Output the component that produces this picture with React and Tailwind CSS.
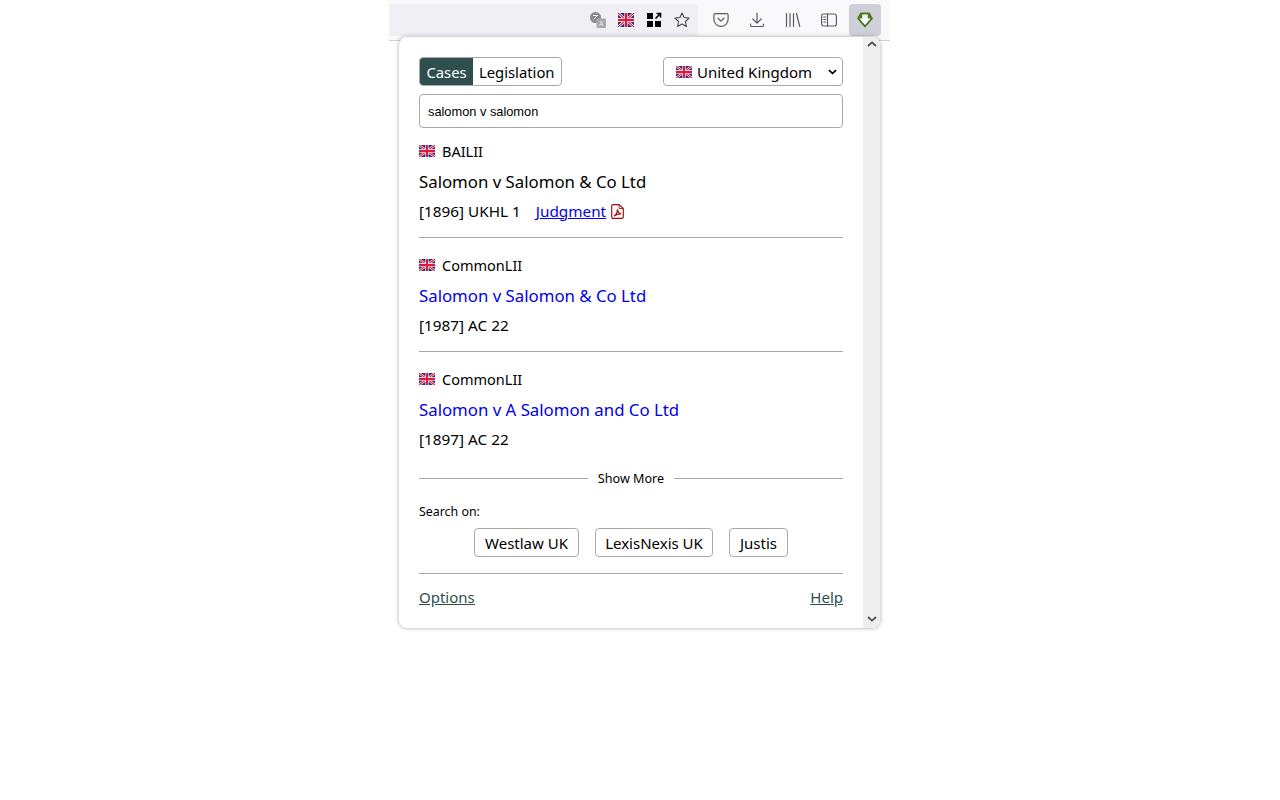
import React from "react";

const Flag = ({ className }) => (
  <svg viewBox="0 0 60 40" preserveAspectRatio="none" className={className}>
    <rect width="60" height="40" fill="#27307a" />
    <path d="M0 0L60 40M60 0L0 40" stroke="#fff" strokeWidth="8" />
    <path d="M0 0L60 40M60 0L0 40" stroke="#e0183c" strokeWidth="3.500" />
    <path d="M30 0V40M0 20H60" stroke="#fff" strokeWidth="12" />
    <path d="M30 0V40M0 20H60" stroke="#e0183c" strokeWidth="7.500" />
  </svg>
);

const Translate = () => (
  <svg viewBox="0 0 16 16" className="w-4 h-4">
    <circle cx="5.5" cy="5.5" r="5.5" fill="#8a8a8e" />
    <path d="M3 3.5h5M3.5 7.5L7 4" stroke="#f0f0f4" strokeWidth="1" fill="none" />
    <rect x="6.5" y="6.5" width="9.5" height="9.5" rx="1" fill="#a9a9ad" />
    <path d="M9.5 14l1.8-5 1.8 5M10.2 12.5h2.2" stroke="#e8e8ea" strokeWidth=".8" fill="none" />
  </svg>
);

const Grid = () => (
  <svg viewBox="0 0 16 16" className="w-4 h-4">
    <rect x="1" y="1" width="6" height="6" fill="#000" />
    <rect x="1" y="9" width="6" height="6" fill="#000" />
    <rect x="9" y="9" width="6" height="6" fill="#000" />
    <path d="M9.5 6.5L14 2M10.5 1.5H14.5V5.5" stroke="#000" strokeWidth="1.6" fill="none" />
  </svg>
);

const Star = () => (
  <svg viewBox="0 0 16 16" className="w-4 h-4" fill="none" stroke="#4a4a50" strokeWidth="1.1" strokeLinejoin="round">
    <path d="M8 .9l2.1 4.6 5 .6-3.7 3.4 1 5L8 12l-4.4 2.5 1-5L.9 6.1l5-.6z" />
  </svg>
);

const Pocket = () => (
  <svg viewBox="0 0 16 16" className="w-4 h-4" fill="none" stroke="#5b5b66" strokeWidth="1.2" strokeLinecap="round" strokeLinejoin="round">
    <path d="M2.2 1.6h11.6c.7 0 1.3.6 1.3 1.3v4.4c0 3.9-3.2 7.1-7.1 7.1S.9 11.2.9 7.3V2.900c0-.7.6-1.300 1.300-1.300z" />
    <path d="M5 6.200l3 2.900 3-2.900" />
  </svg>
);

const Download = () => (
  <svg viewBox="0 0 16 16" className="w-4 h-4" fill="none" stroke="#5b5b66" strokeWidth="1.2" strokeLinecap="round" strokeLinejoin="round">
    <path d="M8 1v10M3.800 7L8 11.200 12.200 7M1.500 12v1.200c0 .8.6 1.300 1.300 1.300h10.400c.7 0 1.300-.5 1.300-1.300V12" />
  </svg>
);

const Library = () => (
  <svg viewBox="0 0 16 16" className="w-4 h-4" fill="none" stroke="#5b5b66" strokeWidth="1.2" strokeLinecap="round">
    <path d="M1.500 1.500v13M5 1.500v13M8.500 1.500v13M11.500 1.500l3.200 13" />
  </svg>
);

const Sidebar = () => (
  <svg viewBox="0 0 16 16" className="w-4 h-4" fill="none" stroke="#5b5b66" strokeWidth="1.2" strokeLinecap="round" strokeLinejoin="round">
    <rect x=".6" y="2" width="14.800" height="12" rx="2" />
    <path d="M6.500 2v12M2.800 5h1.800M2.800 7.500h1.800M2.800 10h1.800" />
  </svg>
);

const Shield = () => (
  <svg viewBox="0 0 16 16" className="w-4 h-4">
    <path d="M4 .6h8c.5 0 .8.2 1 .6l2.700 4.800c.2.300.1.600-.1.900L8.500 15.300c-.3.300-.7.300-1 0L.4 6.900c-.2-.3-.3-.6-.1-.9L3 1.200C3.200.8 3.500.6 4 .6z" fill="#4a7c1f" />
    <path d="M5.300 2.500h5.400v4h2.800L8 12.900 2.500 6.500h2.800z" fill="#fff" />
  </svg>
);

const Pdf = () => (
  <svg viewBox="0 0 12 14" className="w-[13px] h-[15px] ml-[5px]" fill="none" stroke="#9c1010">
    <path d="M1.500.600h6l3.900 3.600v8c0 .7-.5 1.200-1.200 1.200H1.800c-.7 0-1.200-.5-1.200-1.200V1.800c0-.7.500-1.200.9-1.200z" strokeWidth="1.100" />
    <path d="M7.500.600v3.600h3.900" strokeWidth=".8" />
    <path d="M2.800 11.300c1.500-.8 3-3.400 3.200-6.300.3 2.500 1.500 3.800 3.300 4.300-2.300-.1-4.300.6-6.500 2z" strokeWidth="1.100" />
  </svg>
);

const Chevron = ({ up, className }) => (
  <svg viewBox="0 0 10 6" className={className} fill="none" stroke="currentColor" strokeWidth="1.800">
    <path d={up ? "M1 5l4-3.600L9 5" : "M1 1l4 3.600L9 1"} />
  </svg>
);

const Result = ({ source, title, link, cite, judgment, last }) => (
  <div className={last ? "" : "h-[101px] mb-[13px] border-b border-[#a9a9a9]"}>
    <div className="flex items-center h-[28px] text-[14.5px]">
      <Flag className="w-4 h-3" />
      <span className="ml-[7px] mt-[2px]">{source}</span>
    </div>
    <div className={`h-[32px] pt-[2px] flex items-center text-[16.8px] ${link ? "text-[#0000ee]" : ""}`}>{title}</div>
    <div className="h-[28px] flex items-center text-[15.3px]">
      <span>{cite}</span>
      {judgment && (
        <span className="flex items-center ml-[15px]">
          <a className="underline text-[#0000ee]">Judgment</a>
          <Pdf />
        </span>
      )}
    </div>
  </div>
);

const Btn = ({ children, width }) => (
  <div className={`h-[29px] pt-[2px] flex items-center justify-center border border-[#a9a9a9] rounded text-[15px] ${width}`}>{children}</div>
);

export default function App() {
  return (
    <div className="w-full h-[800px] bg-white text-black font-['Noto_Sans','Open_Sans',sans-serif] overflow-hidden">
      <div className="ml-[389px] w-[501px] h-[41px] bg-[#f9f9fb] border-b border-[#cfcfd8] pt-1 flex items-start">
        <div className="w-[309px] shrink-0 h-8 bg-[#f0f0f4] rounded-r flex items-center justify-end gap-3 pr-2">
          <Translate />
          <Flag className="w-4 h-[14px]" />
          <Grid />
          <Star />
        </div>
        <div className="flex-1 h-8 flex items-center justify-end gap-5 pr-[9px]">
          <Pocket />
          <Download />
          <Library />
          <Sidebar />
          <div className="w-8 h-8 -ml-2 rounded bg-[#cfcfd8] flex items-center justify-center">
            <Shield />
          </div>
        </div>
      </div>
      <div className="ml-[399px] w-[481px] h-[591px] -mt-1 relative bg-white rounded-lg shadow-[0_0_4px_rgba(0,0,0,0.35)] flex overflow-hidden">
        <div className="w-[464px] px-5 pt-5">
          <div className="flex justify-between">
            <div className="flex w-[143px] h-[29px] border border-[#a9a9a9] rounded overflow-hidden text-[14.8px]">
              <div className="w-[54px] -ml-px -my-px pt-[2px] pl-px bg-[#2f4f4f] text-white flex items-center justify-center">Cases</div>
              <div className="flex-1 pl-[6px] pt-[2px] flex items-center">Legislation</div>
            </div>
            <div className="w-[180px] h-[29px] border border-[#a9a9a9] rounded flex items-center pl-3 text-[15px]">
              <Flag className="w-4 h-3" />
              <span className="ml-[5px] mt-[2px]">United Kingdom</span>
              <Chevron className="w-[9px] h-[6px] ml-auto mr-[5px] text-black" />
            </div>
          </div>
          <div className="mt-2 h-[34px] border border-[#a9a9a9] rounded flex items-center pl-2 pt-[2px] text-[12.8px] font-['Liberation_Sans',sans-serif]">salomon v salomon</div>
          <div className="mt-[9px]">
            <Result source="BAILII" title="Salomon v Salomon & Co Ltd" cite="[1896] UKHL 1" judgment />
            <Result source="CommonLII" title="Salomon v Salomon & Co Ltd" cite="[1987] AC 22" link />
            <Result source="CommonLII" title="Salomon v A Salomon and Co Ltd" cite="[1897] AC 22" link last />
          </div>
          <div className="flex items-center mt-[15px] text-[12.6px]">
            <div className="flex-1 h-px bg-[#a9a9a9]" />
            <span className="px-[10px] mt-[2px]">Show More</span>
            <div className="flex-1 h-px bg-[#a9a9a9]" />
          </div>
          <div className="mt-[14px] text-[12.4px]">Search on:</div>
          <div className="mt-[6px] flex justify-center gap-4">
            <Btn width="w-[105px]">Westlaw UK</Btn>
            <Btn width="w-[118px]">LexisNexis UK</Btn>
            <Btn width="w-[59px]">Justis</Btn>
          </div>
          <div className="mt-4 h-px bg-[#a9a9a9]" />
          <div className="mt-[12px] flex justify-between text-[15px] text-[#2f4f4f] underline">
            <a>Options</a>
            <a>Help</a>
          </div>
        </div>
        <div className="w-[17px] bg-[#eeeeee] flex flex-col justify-between items-center pt-[4px] pb-[6px] text-[#505050]">
          <Chevron up className="w-[10px] h-[6px]" />
          <Chevron className="w-[10px] h-[6px]" />
        </div>
      </div>
    </div>
  );
}
